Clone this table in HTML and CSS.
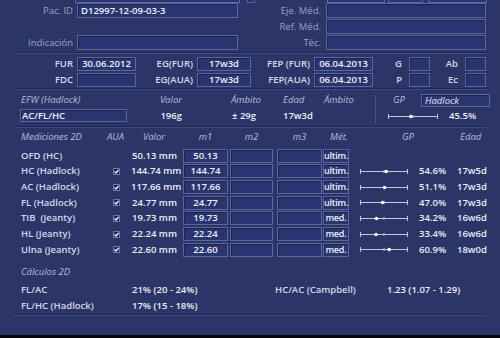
FILE: index.html
```html
<!DOCTYPE html>
<html lang="es">
<head>
<meta charset="utf-8">
<title>Informe</title>
<link rel="stylesheet" href="styles.css">
</head>
<body>
<div class="screen">
  <div class="topstrip">
    <span class="stub s1"></span><span class="stub s2"></span><span class="stub s3"></span><span class="stub s4"></span><span class="stub s5"></span>
  </div>

  <section class="info">
    <span class="lbl dim">Pac. ID</span><span class="fld">D12997-12-09-03-3</span><span class="lbl dim r5">Eje. Méd.</span><span class="fld"></span>
    <span></span><span></span><span class="lbl dim r5">Ref. Méd.</span><span class="fld"></span>
    <span class="lbl dim">Indicación</span><span class="fld"></span><span class="lbl dim r5">Téc.</span><span class="fld"></span>
  </section>

  <div class="rule"></div>

  <section class="dates">
    <span class="lbl">FUR</span><span class="fld c">30.06.2012</span>
    <span class="lbl">EG(FUR)</span><span class="fld c">17w3d</span>
    <span class="lbl">FEP (FUR)</span><span class="fld c">06.04.2013</span>
    <span class="lbl r7">G</span><span class="fld"></span>
    <span class="lbl r7">Ab</span><span class="fld"></span>

    <span class="lbl">FDC</span><span class="fld"></span>
    <span class="lbl">EG(AUA)</span><span class="fld c">17w3d</span>
    <span class="lbl">FEP(AUA)</span><span class="fld c">06.04.2013</span>
    <span class="lbl r7">P</span><span class="fld"></span>
    <span class="lbl r7">Ec</span><span class="fld"></span>
  </section>

  <div class="rule"></div>

  <section class="efw">
    <div class="efw-main">
      <span class="hd pl1">EFW (Hadlock)</span><span class="hd rt">Valor</span><span></span><span class="hd">Ámbito</span><span class="hd">Edad</span><span class="hd">Ámbito</span>
      <span class="fld efw-f">AC/FL/HC</span><span class="val rt">196g</span><span></span><span class="val pl1">± 29g</span><span class="val">17w3d</span><span></span>
    </div>
    <span class="vdiv"></span>
    <div class="efw-gp">
      <div class="gp-top"><span class="hd gp-l">GP</span><span class="fld hd-f">Hadlock</span></div>
      <div class="gp-bot">
        <svg class="sl" width="50" height="7" viewBox="0 0 50 7"><path d="M0.5 1v5M49.5 1v5M0.5 3.5H49.5M25 2v3" stroke="#c3c8de" stroke-width="1" fill="none"/><circle cx="22.8" cy="3.5" r="1.8" fill="#fffbe2"/></svg>
        <span class="val gp-p">45.5%</span>
      </div>
    </div>
  </section>

  <div class="rule r3"></div>

  <section class="meas">
    <div class="mrow mhead">
      <span class="hd">Mediciones 2D</span><span class="hd">AUA</span><span class="hd pl12">Valor</span><span class="hd c m1">m1</span><span class="hd c m2">m2</span><span class="hd c m3">m3</span><span class="hd pl7">Mét.</span><span class="hd pl42">GP</span><span></span><span class="hd pl3">Edad</span>
    </div>

    <div class="mrow">
      <span class="name">OFD (HC)</span><span></span><span class="val rt pr6">50.13 mm</span>
      <span class="box m1">50.13</span><span class="box m2"></span><span class="box m3"></span><span class="box met">ultim.</span>
      <span></span><span></span><span></span>
    </div>
    <div class="mrow">
      <span class="name">HC (Hadlock)</span>
      <span class="aua"><svg class="cb" width="7" height="7" viewBox="0 0 7 7"><rect x="0.5" y="0.5" width="6" height="6" fill="#1e2654" stroke="#6d78a8"/><path d="M1.5 3.5L3 5L5.6 1.8" fill="none" stroke="#fff" stroke-width="1.2"/></svg></span>
      <span class="val rt pr6">144.74 mm</span>
      <span class="box m1">144.74</span><span class="box m2"></span><span class="box m3"></span><span class="box met">ultim.</span>
      <span class="gp"><svg class="sl" width="48" height="7" viewBox="0 0 48 7"><path d="M0.5 1v5M47.5 1v5M0.5 3.5H47.5M24 2v3" stroke="#c3c8de" stroke-width="1" fill="none"/><circle cx="26.2" cy="3.5" r="1.8" fill="#fffbe2"/></svg></span>
      <span class="val">54.6%</span><span class="val">17w5d</span>
    </div>
    <div class="mrow">
      <span class="name">AC (Hadlock)</span>
      <span class="aua"><svg class="cb" width="7" height="7" viewBox="0 0 7 7"><rect x="0.5" y="0.5" width="6" height="6" fill="#1e2654" stroke="#6d78a8"/><path d="M1.5 3.5L3 5L5.6 1.8" fill="none" stroke="#fff" stroke-width="1.2"/></svg></span>
      <span class="val rt pr6">117.66 mm</span>
      <span class="box m1">117.66</span><span class="box m2"></span><span class="box m3"></span><span class="box met">ultim.</span>
      <span class="gp"><svg class="sl" width="48" height="7" viewBox="0 0 48 7"><path d="M0.5 1v5M47.5 1v5M0.5 3.5H47.5M24 2v3" stroke="#c3c8de" stroke-width="1" fill="none"/><circle cx="24.5" cy="3.5" r="1.8" fill="#fffbe2"/></svg></span>
      <span class="val">51.1%</span><span class="val">17w3d</span>
    </div>
    <div class="mrow">
      <span class="name">FL (Hadlock)</span>
      <span class="aua"><svg class="cb" width="7" height="7" viewBox="0 0 7 7"><rect x="0.5" y="0.5" width="6" height="6" fill="#1e2654" stroke="#6d78a8"/><path d="M1.5 3.5L3 5L5.6 1.8" fill="none" stroke="#fff" stroke-width="1.2"/></svg></span>
      <span class="val rt pr6">24.77 mm</span>
      <span class="box m1">24.77</span><span class="box m2"></span><span class="box m3"></span><span class="box met">ultim.</span>
      <span class="gp"><svg class="sl" width="48" height="7" viewBox="0 0 48 7"><path d="M0.5 1v5M47.5 1v5M0.5 3.5H47.5M24 2v3" stroke="#c3c8de" stroke-width="1" fill="none"/><circle cx="22.6" cy="3.5" r="1.8" fill="#fffbe2"/></svg></span>
      <span class="val">47.0%</span><span class="val">17w3d</span>
    </div>
    <div class="mrow">
      <span class="name">TIB&nbsp; (Jeanty)</span>
      <span class="aua"><svg class="cb" width="7" height="7" viewBox="0 0 7 7"><rect x="0.5" y="0.5" width="6" height="6" fill="#1e2654" stroke="#6d78a8"/><path d="M1.5 3.5L3 5L5.6 1.8" fill="none" stroke="#fff" stroke-width="1.2"/></svg></span>
      <span class="val rt pr6">19.73 mm</span>
      <span class="box m1">19.73</span><span class="box m2"></span><span class="box m3"></span><span class="box met">med.</span>
      <span class="gp"><svg class="sl" width="48" height="7" viewBox="0 0 48 7"><path d="M0.5 1v5M47.5 1v5M0.5 3.5H47.5M24 2v3" stroke="#c3c8de" stroke-width="1" fill="none"/><circle cx="16.4" cy="3.5" r="1.8" fill="#fffbe2"/></svg></span>
      <span class="val">34.2%</span><span class="val">16w6d</span>
    </div>
    <div class="mrow">
      <span class="name">HL (Jeanty)</span>
      <span class="aua"><svg class="cb" width="7" height="7" viewBox="0 0 7 7"><rect x="0.5" y="0.5" width="6" height="6" fill="#1e2654" stroke="#6d78a8"/><path d="M1.5 3.5L3 5L5.6 1.8" fill="none" stroke="#fff" stroke-width="1.2"/></svg></span>
      <span class="val rt pr6">22.24 mm</span>
      <span class="box m1">22.24</span><span class="box m2"></span><span class="box m3"></span><span class="box met">med.</span>
      <span class="gp"><svg class="sl" width="48" height="7" viewBox="0 0 48 7"><path d="M0.5 1v5M47.5 1v5M0.5 3.5H47.5M24 2v3" stroke="#c3c8de" stroke-width="1" fill="none"/><circle cx="16.0" cy="3.5" r="1.8" fill="#fffbe2"/></svg></span>
      <span class="val">33.4%</span><span class="val">16w6d</span>
    </div>
    <div class="mrow">
      <span class="name">Ulna (Jeanty)</span>
      <span class="aua"><svg class="cb" width="7" height="7" viewBox="0 0 7 7"><rect x="0.5" y="0.5" width="6" height="6" fill="#1e2654" stroke="#6d78a8"/><path d="M1.5 3.5L3 5L5.6 1.8" fill="none" stroke="#fff" stroke-width="1.2"/></svg></span>
      <span class="val rt pr6">22.60 mm</span>
      <span class="box m1">22.60</span><span class="box m2"></span><span class="box m3"></span><span class="box met">med.</span>
      <span class="gp"><svg class="sl" width="48" height="7" viewBox="0 0 48 7"><path d="M0.5 1v5M47.5 1v5M0.5 3.5H47.5M24 2v3" stroke="#c3c8de" stroke-width="1" fill="none"/><circle cx="29.2" cy="3.5" r="1.8" fill="#fffbe2"/></svg></span>
      <span class="val">60.9%</span><span class="val">18w0d</span>
    </div>
  </section>

  <section class="calc">
    <div class="hd calc-h">Cálculos 2D</div>
    <div class="crow"><span class="name">FL/AC</span><span class="val">21% (20 - 24%)</span><span class="name">HC/AC (Campbell)</span><span class="val">1.23 (1.07 - 1.29)</span></div>
    <div class="crow"><span class="name">FL/HC (Hadlock)</span><span class="val">17% (15 - 18%)</span><span></span><span></span></div>
  </section>

  <div class="rule r0"></div>
</div>
</body>
</html>
```

FILE: styles.css
```css
* { box-sizing: border-box; margin: 0; padding: 0; }

html, body {
  width: 500px;
  height: 338px;
  overflow: hidden;
  background: #06070b;
}

body {
  font-family: "Open Sans", "Noto Sans", sans-serif;
  font-size: 9.5px;
  font-weight: 600;
  color: #eceef7;
}

.screen {
  height: 335px;
  background: #2c3567;
}

/* generic pieces */
.fld {
  display: block;
  height: 15px;
  background: #2a356f;
  border: 1px solid #5a68a1;
  box-shadow: inset 1px 1px 0 #1a2252;
  color: #eef0f8;
  padding-left: 3px;
  line-height: 13px;
  white-space: nowrap;
  overflow: hidden;
}

.fld.c { text-align: center; padding-left: 0; }

.lbl {
  text-align: right;
  padding-right: 4px;
  line-height: 15px;
  color: #d6daec;
  white-space: nowrap;
}

.lbl.dim { color: #9aa3c8; font-weight: 400; }
.lbl.r5 { padding-right: 5px; }
.lbl.r7 { padding-right: 7px; }

.hd {
  font-style: italic;
  font-weight: 500;
  color: #b8bedb;
  white-space: nowrap;
}

.val { color: #eceef7; white-space: nowrap; }
.name { color: #d4d8ec; white-space: nowrap; }

.rt { text-align: right; }
.c { text-align: center; }
.pl1 { padding-left: 1px; }
.pl3 { padding-left: 3px; }
.pl7 { padding-left: 7px; }
.pl12 { padding-left: 12px; }
.pl42 { padding-left: 42px; }
.pr6 { padding-right: 6px; }

.rule {
  height: 2px;
  margin: 1px 13px 0 15px;
  border-top: 1px solid #1e2652;
  border-bottom: 1px solid #404b83;
}
.rule.r3 { margin-top: 3px; }
.rule.r0 { margin-top: 0; }

/* top cut-off strip */
.topstrip { display: flex; height: 3px; }
.stub {
  display: block;
  height: 3px;
  background: #2a356f;
  border: 1px solid #5a68a1;
  border-top: 0;
}
.s1 { margin-left: 75px; width: 165px; }
.s2 { margin-left: 7px; width: 8px; }
.s3 { margin-left: 72px; width: 58px; }
.s4 { margin-left: 3px; width: 35px; }
.s5 { margin-left: 5px; width: 59px; }

/* patient info */
.info {
  display: grid;
  grid-template-columns: 77px 161px 88px 160px;
  grid-template-rows: repeat(3, 16px);
  align-items: start;
}

/* dates */
.dates {
  display: grid;
  grid-template-columns: 77px 59px 61px 54px 63px 59px 36px 21px 35px 21px;
  grid-template-rows: 14px 14px;
  row-gap: 2px;
  margin-top: 3px;
  margin-bottom: 1px;
}
.dates .fld { height: 14px; line-height: 12px; }
.dates .lbl { line-height: 14px; }

/* EFW */
.efw {
  display: flex;
  padding-top: 3px;
}
.efw-main {
  margin-left: 20px;
  display: grid;
  grid-template-columns: 107px 55px 49px 52px 41px 51px;
  grid-template-rows: 14px 14px;
  row-gap: 2px;
  line-height: 14px;
}
.efw-f { height: 13px; line-height: 11px; padding-left: 1px; }
.vdiv {
  width: 1px;
  margin: 2px 0 0;
  background: #4a5589;
}
.efw-gp {
  margin-left: 12px;
  display: grid;
  grid-template-rows: 14px 14px;
  row-gap: 2px;
  line-height: 14px;
}
.gp-top, .gp-bot { display: flex; align-items: center; }
.gp-l { margin-left: 5px; width: 28px; }
.hd-f {
  width: 69px;
  height: 13px;
  line-height: 11px;
  font-style: italic;
  font-weight: 500;
  color: #e4e7f3;
}
.gp-p { margin-left: 11px; }
.sl { display: block; }

/* measurements */
.mrow {
  display: grid;
  grid-template-columns: 86px 24px 52px 47px 47px 46px 37px 59px 38px 30px;
  padding-left: 21px;
  height: 15.67px;
  align-items: center;
  line-height: 14px;
}
.mrow.mhead { height: 18px; margin-bottom: 2px; }
.aua { padding-left: 6px; display: flex; align-items: center; }
.cb { display: block; }
.box {
  display: block;
  height: 14px;
  line-height: 12px;
  text-align: center;
  background: #2a356f;
  border: 1px solid #5a68a1;
  box-shadow: inset 1px 1px 0 #1a2252;
  color: #eef0f8;
  white-space: nowrap;
}
.m1 { width: 45px; }
.m2 { width: 43px; }
.m3 { width: 45px; }
.box.met { width: 26px; font-size: 9px; letter-spacing: -0.2px; overflow: visible; }
.gp { display: flex; align-items: center; }

/* calculations */
.calc { padding-left: 21px; }
.calc-h { padding-top: 8px; line-height: 12px; }
.crow {
  display: grid;
  grid-template-columns: 111px 143px 112px 1fr;
  height: 16px;
  line-height: 16px;
}
.calc-h + .crow { margin-top: 4px; }
```
